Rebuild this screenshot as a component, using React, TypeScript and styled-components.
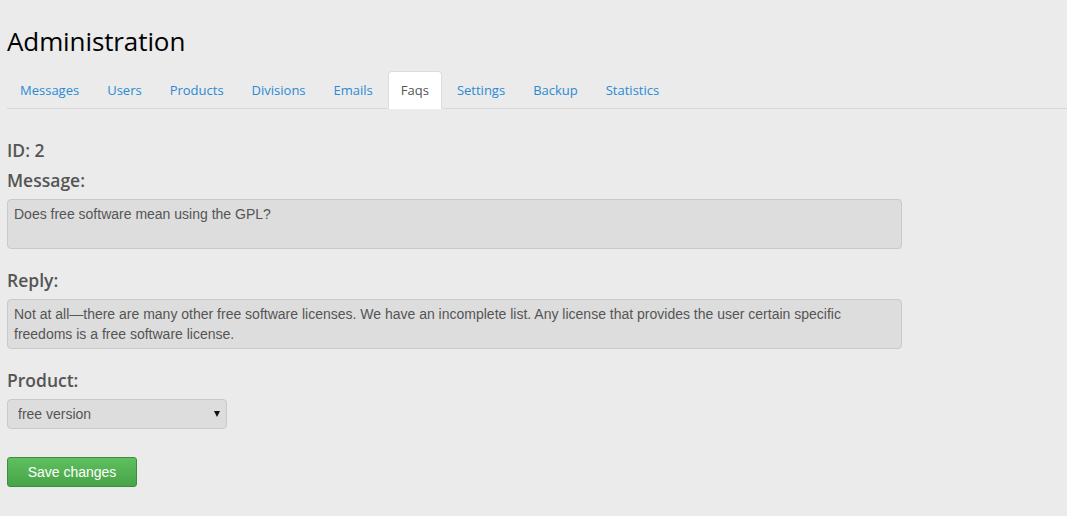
import { FC } from "react";
import styled, { createGlobalStyle } from "styled-components";

const tabs = [
  "Messages",
  "Users",
  "Products",
  "Divisions",
  "Emails",
  "Faqs",
  "Settings",
  "Backup",
  "Statistics",
];

const GlobalStyle = createGlobalStyle`
  html, body {
    margin: 0;
    padding: 0;
    background: #ebebeb;
  }
  body {
    font-family: "Open Sans", "Liberation Sans", sans-serif;
  }
`;

const App: FC = () => {
  return (
    <>
      <GlobalStyle />
      <Page>
        <Title>Administration</Title>
        <Tabs>
          {tabs.map((tab) => (
            <Tab key={tab} $active={tab === "Faqs"}>
              {tab}
            </Tab>
          ))}
        </Tabs>
        <Form>
          <Label>ID: 2</Label>
          <Label>Message:</Label>
          <TextArea defaultValue="Does free software mean using the GPL?" />
          <Label $top={16}>Reply:</Label>
          <TextArea defaultValue="Not at all—there are many other free software licenses. We have an incomplete list. Any license that provides the user certain specific freedoms is a free software license." />
          <Label $top={16}>Product:</Label>
          <SelectWrap>
            <Select defaultValue="free">
              <option value="free">free version</option>
              <option value="pro">pro version</option>
            </Select>
          </SelectWrap>
          <SaveButton type="button">Save changes</SaveButton>
        </Form>
      </Page>
    </>
  );
};

export default App;

const Page = styled.div`
  padding: 0 0 0 7px;
`;

const Title = styled.h1`
  margin: 0;
  padding-top: 24px;
  font-size: 26px;
  font-weight: 400;
  line-height: 34px;
  letter-spacing: -0.1px;
  color: #000;
`;

const Tabs = styled.ul`
  list-style: none;
  display: flex;
  margin: 13px 0 0;
  padding: 0;
  border-bottom: 1px solid #d8d8d8;
`;

const Tab = styled.li<{ $active?: boolean }>`
  padding: 0 12px;
  margin-right: 2px;
  height: 36px;
  line-height: 36px;
  margin-bottom: -1px;
  font-size: 13px;
  color: ${(p) => (p.$active ? "#555" : "#2a8ad4")};
  background: ${(p) => (p.$active ? "#fff" : "transparent")};
  border: 1px solid ${(p) => (p.$active ? "#dcdcdc" : "transparent")};
  border-bottom-color: ${(p) => (p.$active ? "#fff" : "transparent")};
  border-radius: 4px 4px 0 0;
  cursor: pointer;
`;

const Form = styled.div`
  display: flex;
  flex-direction: column;
  align-items: flex-start;
  padding-top: 26px;
`;

const Label = styled.div<{ $top?: number }>`
  margin-top: ${(p) => p.$top ?? 0}px;
  font-size: 17.5px;
  font-weight: 600;
  line-height: 30px;
  color: #555;
`;

const TextArea = styled.textarea`
  box-sizing: border-box;
  width: 895px;
  height: 50px;
  margin-top: 4px;
  padding: 4px 6px;
  font-family: "Liberation Sans", Arial, sans-serif;
  font-size: 14px;
  line-height: 20px;
  color: #555;
  background: #dddddd;
  border: 1px solid #c9c9c9;
  border-radius: 4px;
  resize: none;
  outline: none;
`;

const SelectWrap = styled.div`
  position: relative;
  margin-top: 4px;

  &::after {
    content: "";
    position: absolute;
    right: 7px;
    top: 12px;
    border-left: 3.5px solid transparent;
    border-right: 3.5px solid transparent;
    border-top: 6px solid #111;
    pointer-events: none;
  }
`;

const Select = styled.select`
  display: block;
  box-sizing: border-box;
  width: 220px;
  height: 30px;
  padding: 0 10px;
  font-family: "Liberation Sans", Arial, sans-serif;
  font-size: 14px;
  color: #555;
  background: #dddddd;
  border: 1px solid #c9c9c9;
  border-radius: 4px;
  outline: none;
  appearance: none;
  -webkit-appearance: none;
`;

const SaveButton = styled.button`
  box-sizing: border-box;
  width: 130px;
  height: 30px;
  margin-top: 28px;
  font-family: "Liberation Sans", Arial, sans-serif;
  font-size: 14px;
  color: #fff;
  background: linear-gradient(#5fc05f, #47a447);
  border: 1px solid #3d8b3d;
  border-radius: 3px;
  cursor: pointer;
`;
